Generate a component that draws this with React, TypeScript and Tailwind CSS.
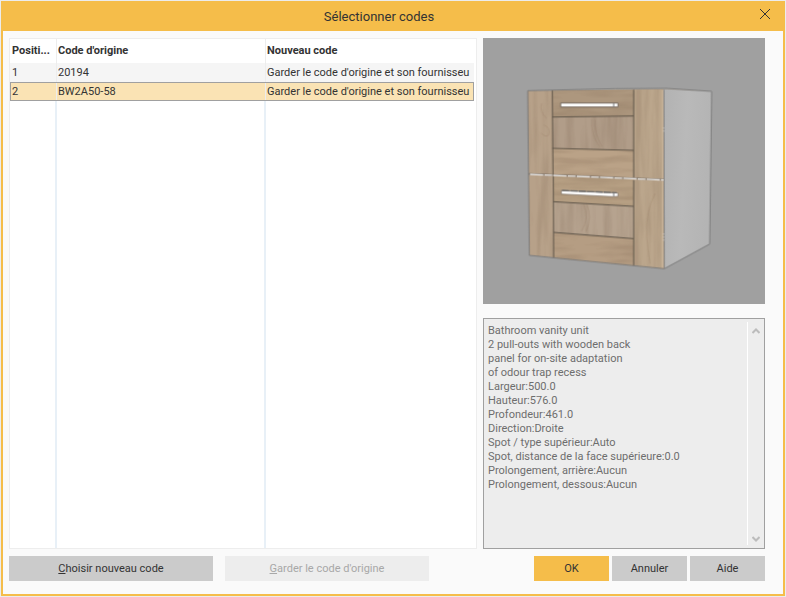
import { useState } from "react";

const rows = [
  { position: 1, origin: "20194", next: "Garder le code d'origine et son fournisseu" },
  { position: 2, origin: "BW2A50-58", next: "Garder le code d'origine et son fournisseu" },
];

const details = [
  "Bathroom vanity unit",
  "2 pull-outs with wooden back",
  "panel for on-site adaptation",
  "of odour trap recess",
  "Largeur:500.0",
  "Hauteur:576.0",
  "Profondeur:461.0",
  "Direction:Droite",
  "Spot / type supérieur:Auto",
  "Spot, distance de la face supérieure:0.0",
  "Prolongement, arrière:Aucun",
  "Prolongement, dessous:Aucun",
].join("\n");

function CabinetPreview() {
  return (
    <svg viewBox="-51 -96 846 798" role="img" aria-label="Bathroom vanity unit" className="block w-full bg-[#a0a0a0]">
      <defs>
        <linearGradient id="side" x1="0" x2="1" y1="0" y2="0.2">
          <stop offset="0" stopColor="#b2b2b2" />
          <stop offset="0.5" stopColor="#b9b9b9" />
          <stop offset="1" stopColor="#b4b4b4" />
        </linearGradient>
        <filter id="grainV" x="0" y="0" width="1" height="1" colorInterpolationFilters="sRGB">
          <feTurbulence type="fractalNoise" baseFrequency="0.045 0.004" numOctaves="3" seed="4" />
          <feColorMatrix values="0 0 0 0 0.46  0 0 0 0 0.37  0 0 0 0 0.29  3 0 0 0 -1.2" />
          <feComposite in2="SourceGraphic" operator="in" />
        </filter>
        <filter id="grainH" x="0" y="0" width="1" height="1" colorInterpolationFilters="sRGB">
          <feTurbulence type="fractalNoise" baseFrequency="0.006 0.05" numOctaves="3" seed="9" />
          <feColorMatrix values="0 0 0 0 0.46  0 0 0 0 0.37  0 0 0 0 0.29  3 0 0 0 -1.2" />
          <feComposite in2="SourceGraphic" operator="in" />
        </filter>
      </defs>

      {/* carcass */}
      <polygon points="490,58 635,64 629,522 493,596" fill="url(#side)" />
      <polygon points="83,62 345,56 500,55 635,64 490,59" fill="#b0aca6" />

      {/* stiles */}
      <polygon points="83,62 490,58 493,596 88,556" fill="#b7a189" />
      <polygon points="401,59 490,58 493,596 401,587" fill="#bba68c" />

      {/* rails and panels */}
      <polygon points="157,61 401,59 401,139 158,141" fill="#ad977e" />
      <polygon points="158,141 401,139 401,241 158,235" fill="#b19d89" />
      <polygon points="158,235 401,241 401,325 158,316" fill="#baa287" />
      <polygon points="158,318 401,327 401,408 160,395" fill="#b69f83" />
      <polygon points="160,395 401,408 401,506 161,488" fill="#b6a38f" />
      <polygon points="161,488 401,506 401,587 161,564" fill="#b59d83" />

      {/* wood grain */}
      <g opacity="0.18">
        <polygon points="83,62 157,61 160,564 88,556" filter="url(#grainV)" />
        <polygon points="401,59 490,58 493,596 401,587" filter="url(#grainV)" />
        <polygon points="158,141 401,139 401,241 158,235" filter="url(#grainV)" />
        <polygon points="160,395 401,408 401,506 161,488" filter="url(#grainV)" />
        <polygon points="157,61 401,59 401,139 158,141" filter="url(#grainH)" />
        <polygon points="158,235 401,241 401,408 160,395" filter="url(#grainH)" />
        <polygon points="161,488 401,506 401,587 161,564" filter="url(#grainH)" />
      </g>
      <g fill="none" stroke="#8b7059" strokeOpacity="0.22" strokeWidth="3">
        <path d="M125 100q-8 24 14 44M132 165q20 8 14 30q-10 8-22-6" />
        <path d="M275 147q-4 44 24 84M285 150q-3 38 20 79" />
        <path d="M250 402q20 40 -6 82M260 404q18 38 -2 80" />
        <path d="M465 370q-30 60-25 130q3 40 10 80" />
      </g>

      {/* joints */}
      <g fill="none" stroke="#5d5448" strokeWidth="3">
        <path d="M157 61L159 315M160 319L161 564M401 59V325M401 330V587" />
        <path d="M157 141L401 138M157 235L401 241M160 395L401 409M161 487L401 506" />
      </g>
      <path d="M487 60V594" stroke="#c9b499" strokeWidth="4" />

      {/* gap between the two drawers */}
      <path d="M86 312L492 329" stroke="#756b61" strokeWidth="5" />
      <path d="M90 313L492 330" stroke="#eceae8" strokeWidth="4" strokeDasharray="40 3 24 3" />

      {/* handles */}
      <path d="M182 99H354V111H182Z" fill="#fff" stroke="#75685c" strokeWidth="3" />
      <path d="M341 99V111" stroke="#777" strokeWidth="3" />
      <path d="M184 362L354 369V379L340 380L184 372Z" fill="#fff" stroke="#75685c" strokeWidth="2" />
      <path d="M186 361L350 368" stroke="#6c6c6c" strokeWidth="4" strokeDasharray="22 3" />
      <path d="M341 369V379" stroke="#777" strokeWidth="3" />

      {/* outline */}
      <path d="M83 62L345 56L500 55L635 64L629 522L493 596L88 556Z" fill="none" stroke="#7c7c7c" strokeWidth="3" />
      <path d="M492 59L493 596" stroke="#858585" strokeWidth="3" />
      <path d="M491 172V190M491 490V515" stroke="#ddd" strokeWidth="2" strokeDasharray="4 5" />
    </svg>
  );
}

export default function App() {
  const [selected, setSelected] = useState(2);

  return (
    <div className="flex min-h-screen flex-col bg-[#ececec] p-px font-['Roboto','Liberation_Sans',sans-serif] text-[11px] leading-[14px] text-[#333]">
      <div className="flex flex-1 flex-col border-2 border-t-0 border-[#f5bd4a] bg-[#fafafa]">
        {/* Title bar */}
        <header className="flex h-[30px] items-center bg-[#f5bd4a] pr-3">
          <h1 className="flex-1 pt-0.5 text-center text-[13px] leading-4">Sélectionner codes</h1>
          <button type="button" aria-label="Fermer" className="pb-1 pl-1">
            <svg viewBox="0 0 12 12" className="h-3 w-3" fill="none" stroke="#333" strokeWidth="1">
              <path d="M1 1l10 10M11 1L1 11" />
            </svg>
          </button>
        </header>

        <main className="flex flex-1 gap-1.5 pt-[7px] pr-[18px] pl-1.5">
          {/* Code list */}
          <section className="min-w-0 flex-1 border border-[#ededed] bg-white pr-0.5">
            <table className="h-full w-full table-fixed border-separate border-spacing-0 text-left">
              <colgroup>
                <col className="w-[47px]" />
                <col className="w-[209px]" />
                <col />
              </colgroup>
              <thead>
                <tr className="h-6">
                  <th className="border-r border-[#ededed] pl-0.5 font-bold whitespace-nowrap">Positi...</th>
                  <th className="border-r border-[#ededed] pl-px font-bold">Code d'origine</th>
                  <th className="pl-px font-bold">Nouveau code</th>
                </tr>
              </thead>
              <tbody>
                {rows.map((row) => (
                  <tr
                    key={row.position}
                    onClick={() => setSelected(row.position)}
                    className={
                      row.position === selected
                        ? "h-[19px] bg-[#fae3b4] outline -outline-offset-1 outline-[#a0a0a0]"
                        : "h-[19px] bg-[#f5f5f5]"
                    }
                  >
                    <td className="border-r border-[#ededed] pl-0.5">{row.position}</td>
                    <td className="border-r border-[#ededed] pl-px">{row.origin}</td>
                    <td className="overflow-hidden pl-px whitespace-nowrap">{row.next}</td>
                  </tr>
                ))}
                <tr>
                  <td className="border-r-2 border-[#e8f0f7]" />
                  <td className="border-r-2 border-[#e8f0f7]" />
                  <td />
                </tr>
              </tbody>
            </table>
          </section>

          {/* Preview and description */}
          <aside className="flex w-[282px] shrink-0 flex-col gap-3.5">
            <CabinetPreview />
            <div className="flex flex-1 border border-[#a0a0a0] bg-[#ededed]">
              <textarea
                readOnly
                aria-label="Description"
                value={details}
                className="flex-1 resize-none overflow-hidden pt-[5px] pl-1 text-[#6d6d6d] outline-none"
              />
              <div className="my-[3px] flex w-[17px] flex-col items-center justify-between border-l border-white pt-[5px] pb-0.5">
                <button type="button" aria-label="Défiler vers le haut">
                  <svg viewBox="0 0 8 8" className="h-2 w-2" fill="none" stroke="#bcbcbc" strokeWidth="2">
                    <path d="M0.5 6L4 2.5L7.5 6" />
                  </svg>
                </button>
                <button type="button" aria-label="Défiler vers le bas">
                  <svg viewBox="0 0 8 8" className="h-2 w-2" fill="none" stroke="#bcbcbc" strokeWidth="2">
                    <path d="M0.5 2L4 5.5L7.5 2" />
                  </svg>
                </button>
              </div>
            </div>
          </aside>
        </main>

        {/* Actions */}
        <footer className="flex pt-[7px] pr-[18px] pb-[13px] pl-1.5">
          <button type="button" className="h-[25px] w-[204px] bg-[#cbcbcb]">
            <span className="underline">C</span>hoisir nouveau code
          </button>
          <button type="button" disabled className="ml-3 h-[25px] w-[204px] bg-[#ededed] text-[#a8a8a8]">
            <span className="underline">G</span>arder le code d'origine
          </button>
          <div className="ml-auto flex gap-[3px]">
            <button type="button" className="h-[25px] w-[75px] bg-[#f5bd4a]">
              OK
            </button>
            <button type="button" className="h-[25px] w-[75px] bg-[#cbcbcb]">
              Annuler
            </button>
            <button type="button" className="h-[25px] w-[75px] bg-[#cbcbcb]">
              Aide
            </button>
          </div>
        </footer>
      </div>
    </div>
  );
}
